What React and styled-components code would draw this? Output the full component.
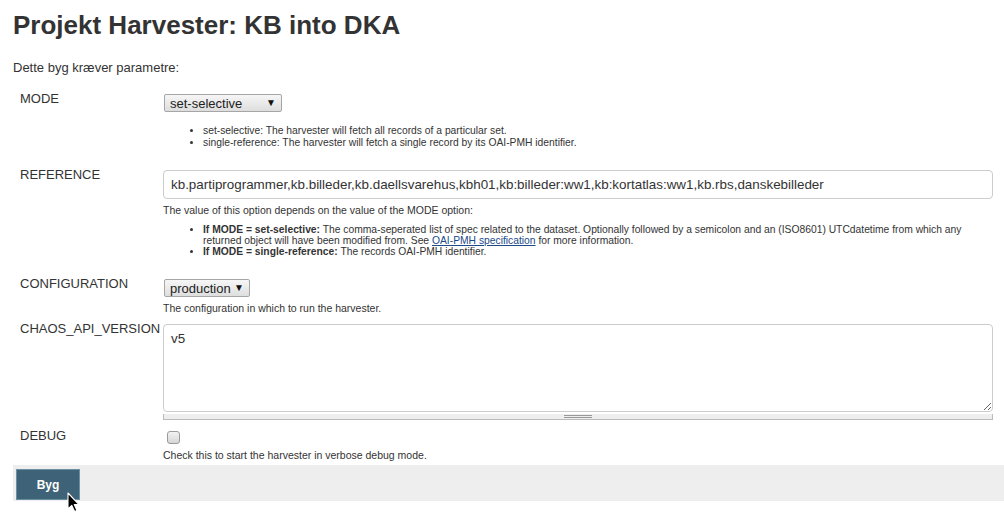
import styled, { createGlobalStyle } from "styled-components";

const GlobalStyle = createGlobalStyle`
	body {
		margin: 0;
		background: #ffffff;
		font-family: "Liberation Sans", Arial, sans-serif;
		color: #333333;
	}
`;

export default function App() {
	return (
		<>
			<GlobalStyle />
			<Page>
				<Title>Projekt Harvester: KB into DKA</Title>
				<Intro>Dette byg kræver parametre:</Intro>

				<Param>
					<Label>MODE</Label>
					<Field>
						<Select width={118}>
							set-selective
							<Arrow>▼</Arrow>
						</Select>
						<SmallList top={13}>
							<li>set-selective: The harvester will fetch all records of a particular set.</li>
							<li>single-reference: The harvester will fetch a single record by its OAI-PMH identifier.</li>
						</SmallList>
					</Field>
				</Param>

				<Param gap={18}>
					<Label>REFERENCE</Label>
					<Field>
						<TextInput
							readOnly
							value="kb.partiprogrammer,kb.billeder,kb.daellsvarehus,kbh01,kb:billeder:ww1,kb:kortatlas:ww1,kb.rbs,danskebilleder"
						/>
						<Description>The value of this option depends on the value of the MODE option:</Description>
						<SmallList top={7} tight>
							<li>
								<b>If MODE = set-selective:</b> The comma-seperated list of spec related to the dataset. Optionally followed by a semicolon and an (ISO8601) UTCdatetime from which any returned object will have been modified from. See{" "}
								<Link href="#">OAI-PMH specification</Link> for more information.
							</li>
							<li>
								<b>If MODE = single-reference:</b> The records OAI-PMH identifier.
							</li>
						</SmallList>
					</Field>
				</Param>

				<Param gap={19}>
					<Label>CONFIGURATION</Label>
					<Field>
						<Select width={86}>
							production
							<Arrow>▼</Arrow>
						</Select>
						<Description>The configuration in which to run the harvester.</Description>
					</Field>
				</Param>

				<Param gap={6}>
					<Label>CHAOS_API_VERSION</Label>
					<Field>
						<TextArea readOnly value="v5" />
						<ResizeBar>
							<Grip />
						</ResizeBar>
					</Field>
				</Param>

				<Param gap={8}>
					<Label>DEBUG</Label>
					<Field>
						<CheckBox />
						<Description>Check this to start the harvester in verbose debug mode.</Description>
					</Field>
				</Param>

				<BottomBar>
					<BuildButton>Byg</BuildButton>
					<Cursor viewBox="0 0 13 21" width="13" height="21">
						<path d="M1 1 L1 17 L4.8 13.4 L7.6 19.6 L10 18.6 L7.3 12.6 L12 12.6 Z" fill="#000" stroke="#fff" strokeWidth="1.1" strokeLinejoin="round" />
					</Cursor>
				</BottomBar>
			</Page>
		</>
	);
}

const Page = styled.div`
	padding: 0 11px 26px 13px;
	width: 1004px;
	box-sizing: border-box;
`;

const Title = styled.h1`
	margin: 0;
	padding-top: 8px;
	font-size: 26px;
	line-height: 34px;
	font-weight: 700;
	color: #333333;
`;

const Intro = styled.div`
	margin-top: 18px;
	font-size: 13px;
	line-height: 16px;
`;

const Param = styled.div`
	display: grid;
	grid-template-columns: 150px 1fr;
	align-items: start;
	margin-top: ${(p) => (p.gap !== undefined ? p.gap : 15)}px;
`;

const Label = styled.div`
	padding-left: 7px;
	font-size: 13px;
	line-height: 16px;
	white-space: nowrap;
`;

const Field = styled.div`
	display: flex;
	flex-direction: column;
	align-items: flex-start;
	padding-top: 3px;
	min-width: 0;
`;

const Select = styled.div`
	display: flex;
	align-items: center;
	justify-content: space-between;
	box-sizing: border-box;
	width: ${(p) => p.width}px;
	height: 18px;
	margin-left: 1px;
	padding: 0 5px 0 5px;
	border: 1px solid #a6a6a6;
	border-radius: 2px;
	background: linear-gradient(#f6f6f6, #dedede);
	font-size: 13px;
	color: #222222;
`;

const Arrow = styled.span`
	font-size: 10px;
	line-height: 10px;
	color: #111111;
`;

const SmallList = styled.ul`
	margin: ${(p) => p.top}px 23px 0 0;
	padding-left: 40px;
	font-size: 10.3px;
	line-height: ${(p) => (p.tight ? 11 : 12)}px;
	color: #333333;

	b {
		font-weight: 700;
	}
`;

const Link = styled.a`
	color: #204a87;
	text-decoration: underline;
`;

const TextInput = styled.input`
	box-sizing: border-box;
	width: 100%;
	height: 29px;
	padding: 0 7px;
	border: 1px solid #cccccc;
	border-radius: 4px;
	font-family: "Liberation Sans", Arial, sans-serif;
	font-size: 13.4px;
	color: #333333;
	outline: none;
`;

const Description = styled.div`
	margin-top: 4px;
	font-size: 10.5px;
	line-height: 14px;
	color: #333333;
`;

const TextArea = styled.textarea`
	box-sizing: border-box;
	width: 100%;
	height: 88px;
	padding: 6px 7px;
	border: 1px solid #cccccc;
	border-radius: 4px;
	font-family: "Liberation Sans", Arial, sans-serif;
	font-size: 13.4px;
	color: #333333;
	resize: vertical;
	outline: none;
`;

const ResizeBar = styled.div`
	display: flex;
	justify-content: center;
	align-items: center;
	box-sizing: border-box;
	width: 100%;
	height: 6px;
	margin-top: 2px;
	background: #eeeeee;
	border-left: 1px solid #bbbbbb;
	border-right: 1px solid #bbbbbb;
	border-bottom: 1px solid #bbbbbb;
`;

const Grip = styled.div`
	width: 28px;
	height: 3px;
	border-top: 1px solid #999999;
	border-bottom: 1px solid #999999;
	box-sizing: border-box;
`;

const CheckBox = styled.span`
	display: block;
	box-sizing: border-box;
	width: 13px;
	height: 13px;
	margin: 0 0 0 4px;
	border: 1px solid #9a9a9a;
	border-radius: 3px;
	background: linear-gradient(#f2f2f2, #d6d6d6);
`;

const BottomBar = styled.div`
	position: relative;
	margin-top: 3px;
	margin-right: -11px;
	padding: 4px 3px 1px;
	background: #eeeeee;
`;

const BuildButton = styled.button`
	display: block;
	width: 64px;
	height: 31px;
	border: 1px solid #6b8fa3;
	background: #3e6378;
	color: #ffffff;
	font-family: "Liberation Sans", Arial, sans-serif;
	font-size: 12px;
	font-weight: 700;
	cursor: pointer;
`;

const Cursor = styled.svg`
	position: absolute;
	z-index: 2;
	left: 54px;
	top: 27px;
	overflow: visible;
`;
